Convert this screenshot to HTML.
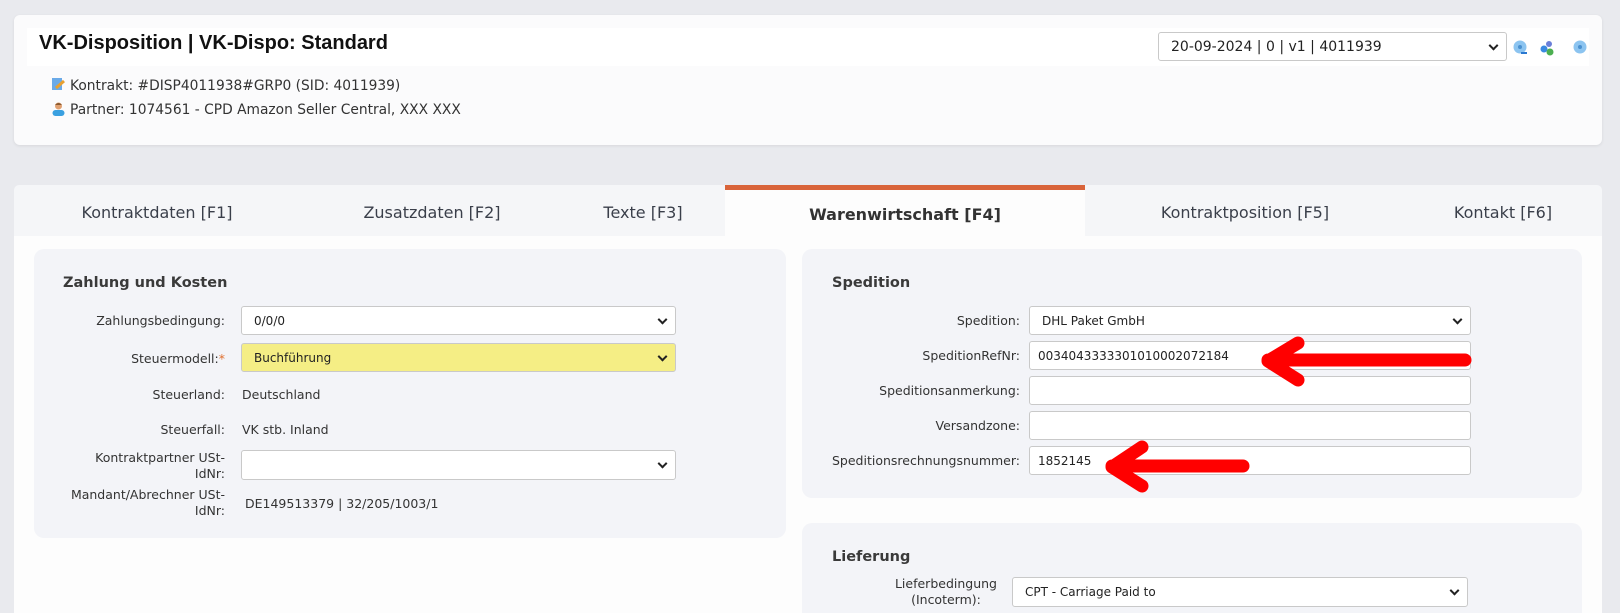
<!DOCTYPE html>
<html style="background:#e9eaee;width:1620px;height:613px;overflow:hidden"><head><meta charset="utf-8">
<style>
*{box-sizing:border-box;margin:0;padding:0}
body{width:1620px;height:613px;overflow:hidden;background:#e9eaee;font-family:"DejaVu Sans","Liberation Sans",sans-serif;color:#333;position:relative}
.a{position:absolute;white-space:nowrap}
.card{position:absolute;left:14px;top:15px;width:1588px;height:130px;background:#fbfbfc;border-radius:6px;box-shadow:0 1px 3px rgba(0,0,0,.08)}
.band{position:absolute;left:27px;top:28px;width:1562px;height:38px;background:#fff}
.sel{position:absolute;background:#fff;border:1px solid #c9c9c9;border-radius:3px;font-size:12px;color:#222;padding-left:12px;display:flex;align-items:center}
.sel::after{content:"";position:absolute;right:9px;top:50%;width:5px;height:5px;border-right:2px solid #222;border-bottom:2px solid #222;transform:translateY(-70%) rotate(45deg)}
.inp{position:absolute;background:#fff;border:1px solid #c9c9c9;border-radius:3px;font-size:12px;color:#222;padding-left:8px;display:flex;align-items:center}
.lbl{position:absolute;font-size:12.5px;color:#333;text-align:right;white-space:nowrap}
.panel{position:absolute;background:#f3f4f8;border-radius:10px}
.h{position:absolute;font-weight:bold;font-size:14.5px;color:#3a3a3a}
.tab{position:absolute;top:203px;font-size:16px;color:#3a3f4a;transform:translateX(-50%);white-space:nowrap}
</style></head><body>
<div class="card"></div>
<div class="band"></div>
<div class="a" style="left:39px;top:32px;font-family:'Liberation Sans',sans-serif;font-weight:bold;font-size:20px;color:#111">VK-Disposition | VK-Dispo: Standard</div>
<div class="sel" style="left:1158px;top:32px;width:349px;height:29px;font-size:14px">20-09-2024 | 0 | v1 | 4011939</div>
<svg class="a" style="left:1513px;top:40px" width="16" height="16"><circle cx="7" cy="7" r="6.5" fill="#8cc4f0"/><circle cx="7" cy="7" r="2" fill="#4a90d0"/><path d="M8 13h6" stroke="#2a78d0" stroke-width="2"/></svg>
<svg class="a" style="left:1539px;top:40px" width="16" height="16"><circle cx="10" cy="4" r="3" fill="#6a7fd8"/><circle cx="5" cy="9" r="3.5" fill="#3a8ae0"/><circle cx="11" cy="12" r="3.5" fill="#4caf50"/></svg>
<svg class="a" style="left:1573px;top:40px" width="15" height="15"><circle cx="7" cy="7" r="6.5" fill="#8cc4f0"/><circle cx="7" cy="7" r="2" fill="#4a90d0"/></svg>
<svg class="a" style="left:52px;top:78px" width="14" height="13"><rect x="0" y="0" width="10" height="12" fill="#6aaae8"/><path d="M4 10l8-7" stroke="#e8a030" stroke-width="3"/></svg>
<div class="a" style="left:70px;top:78px;font-size:13.8px;color:#333">Kontrakt: #DISP4011938#GRP0 (SID: 4011939)</div>
<svg class="a" style="left:52px;top:102px" width="13" height="14"><circle cx="6.5" cy="4" r="3.5" fill="#e0a070"/><path d="M3 3Q6.5-1 10 3" fill="#8a5a30"/><rect x="0.5" y="8" width="12" height="6" rx="3" fill="#3aa0e0"/></svg>
<div class="a" style="left:70px;top:102px;font-size:13.8px;color:#333">Partner: 1074561 - CPD Amazon Seller Central, XXX XXX</div>

<div class="a" style="left:14px;top:185px;width:1588px;height:51px;background:#f5f6f8;border-radius:5px 5px 0 0"></div>
<div class="a" style="left:14px;top:236px;width:1588px;height:377px;background:#fdfdfd"></div>
<div class="a" style="left:725px;top:185px;width:360px;height:51px;background:#fdfdfd;border-top:5px solid #d9643a"></div>
<div class="tab" style="left:157px">Kontraktdaten [F1]</div>
<div class="tab" style="left:432px">Zusatzdaten [F2]</div>
<div class="tab" style="left:643px">Texte [F3]</div>
<div class="tab" style="left:905px;top:205px;font-weight:bold;color:#333">Warenwirtschaft [F4]</div>
<div class="tab" style="left:1245px">Kontraktposition [F5]</div>
<div class="tab" style="left:1503px">Kontakt [F6]</div>

<div class="panel" style="left:34px;top:249px;width:752px;height:289px"></div>
<div class="h" style="left:63px;top:275px">Zahlung und Kosten</div>
<div class="lbl" style="right:1395px;top:313px">Zahlungsbedingung:</div>
<div class="sel" style="left:241px;top:306px;width:435px;height:29px">0/0/0</div>
<div class="lbl" style="right:1395px;top:351px">Steuermodell:<span style="color:#e07030">*</span></div>
<div class="sel" style="left:241px;top:343px;width:435px;height:29px;background:#f5ee85">Buchführung</div>
<div class="lbl" style="right:1395px;top:387px">Steuerland:</div>
<div class="a" style="left:242px;top:387px;font-size:12.5px">Deutschland</div>
<div class="lbl" style="right:1395px;top:422px">Steuerfall:</div>
<div class="a" style="left:242px;top:422px;font-size:12.5px">VK stb. Inland</div>
<div class="lbl" style="right:1395px;top:450px;line-height:16px">Kontraktpartner USt-<br>IdNr:</div>
<div class="sel" style="left:241px;top:450px;width:435px;height:30px"></div>
<div class="lbl" style="right:1395px;top:487px;line-height:16px">Mandant/Abrechner USt-<br>IdNr:</div>
<div class="a" style="left:245px;top:496px;font-size:12.5px">DE149513379 | 32/205/1003/1</div>

<div class="panel" style="left:802px;top:249px;width:780px;height:249px"></div>
<div class="h" style="left:832px;top:275px">Spedition</div>
<div class="lbl" style="right:600px;top:313px">Spedition:</div>
<div class="sel" style="left:1029px;top:306px;width:442px;height:29px">DHL Paket GmbH</div>
<div class="lbl" style="right:600px;top:348px">SpeditionRefNr:</div>
<div class="inp" style="left:1029px;top:341px;width:442px;height:29px">0034043333301010002072184</div>
<div class="lbl" style="right:600px;top:383px">Speditionsanmerkung:</div>
<div class="inp" style="left:1029px;top:376px;width:442px;height:29px"></div>
<div class="lbl" style="right:600px;top:418px">Versandzone:</div>
<div class="inp" style="left:1029px;top:411px;width:442px;height:29px"></div>
<div class="lbl" style="right:600px;top:453px">Speditionsrechnungsnummer:</div>
<div class="inp" style="left:1029px;top:446px;width:442px;height:29px">1852145</div>

<div class="panel" style="left:802px;top:523px;width:780px;height:90px;border-radius:10px 10px 0 0"></div>
<div class="h" style="left:832px;top:549px">Lieferung</div>
<div class="lbl" style="right:623px;top:576px;line-height:16px;text-align:center">Lieferbedingung<br>(Incoterm):</div>
<div class="sel" style="left:1012px;top:577px;width:456px;height:30px">CPT - Carriage Paid to</div>

<svg class="a" style="left:0;top:0" width="1620" height="613">
<g stroke="#ff0000" stroke-width="13" stroke-linecap="round" stroke-linejoin="round" fill="none">
<path d="M1465 360H1268M1298 343L1268 361L1298 380"/>
<path d="M1243 466H1112M1142 447L1112 467L1142 486"/>
</g>
</svg>
</body></html>
